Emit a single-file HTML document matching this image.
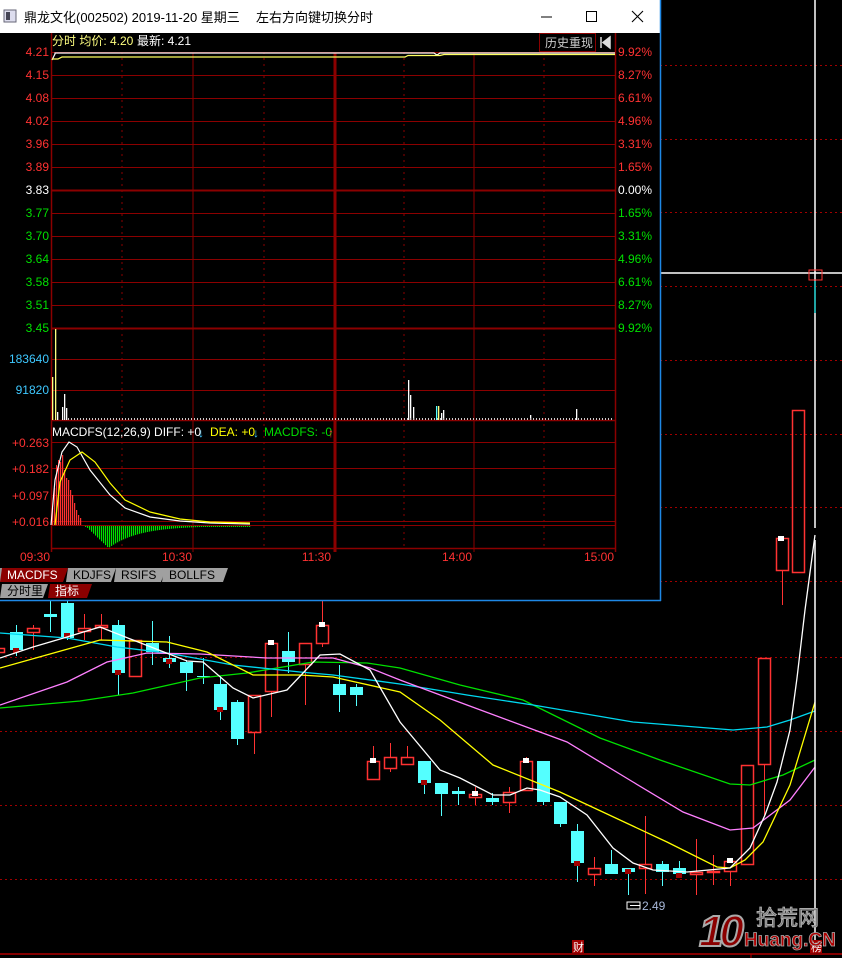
<!DOCTYPE html>
<html><head><meta charset="utf-8">
<style>
html,body{margin:0;padding:0;background:#000;width:842px;height:958px;overflow:hidden;font-family:"Liberation Sans","Noto Sans CJK SC",sans-serif;}
svg{position:absolute;left:0;top:0}
text{font-family:"Liberation Sans","Noto Sans CJK SC",sans-serif;}
</style></head>
<body>
<svg id="s" width="842" height="958" viewBox="0 0 842 958" xmlns="http://www.w3.org/2000/svg">
<rect width="842" height="958" fill="#000"/>
<g id="bg"></g>
<g id="cand"></g>
<g fill="none" stroke-width="1.3">
<polyline stroke="#00e000" points="0,708 80,701 133,693 200,678 247,673 313,662 367,663 400,668 460,685 523,700 600,738 660,760 730,784 750,785 783,775 815,760"/>
<polyline stroke="#00d8f0" points="0,633 67,638 117,647 167,653 233,665 300,672 333,675 400,684 467,695 533,705 633,722 733,730 767,727 790,720 815,711"/>
<polyline stroke="#ff80ff" points="0,705 67,682 107,662 147,653 200,654 267,658 333,658 370,668 400,680 467,705 567,742 633,782 683,812 730,830 753,828 790,800 815,767"/>
<polyline stroke="#ffff00" points="0,668 50,654 100,640 167,642 207,652 253,675 300,675 333,677 400,692 440,720 493,765 560,792 667,842 717,867 730,868 745,860 763,842 790,785 815,702"/>
<polyline stroke="#ffffff" points="0,658 33,647 67,637 100,627 133,640 187,661 203,662 233,688 253,698 287,690 320,655 340,654 370,670 400,722 440,770 460,778 493,795 510,795 527,788 540,790 560,797 587,815 613,848 633,863 653,870 687,872 730,868 750,848 765,815 777,782 790,730 797,678 805,610 815,535"/>
</g>
<line x1="660" y1="273" x2="842" y2="273" stroke="#fff" stroke-width="1.5"/>
<line x1="815" y1="0" x2="815" y2="528" stroke="#fff" stroke-width="1.5"/>
<line x1="815" y1="540" x2="815" y2="945" stroke="#fff" stroke-width="1.5"/>
<line x1="815" y1="281" x2="815" y2="313" stroke="#00b0b0" stroke-width="1.5"/>
<rect x="809" y="270" width="13" height="10" fill="none" stroke="#ff3232" stroke-width="1"/>
<line x1="0" y1="954" x2="842" y2="954" stroke="#b00000" stroke-width="1.5"/>
<line x1="751" y1="954" x2="751" y2="958" stroke="#b00000"/>
<rect x="572" y="940" width="12" height="13" fill="#a00000"/>
<text x="573" y="951" font-size="11" fill="#fff">财</text>
<rect x="810" y="940" width="12" height="13" fill="#a00000"/>
<text x="811" y="951" font-size="11" fill="#fff">榜</text>
<rect x="627" y="902" width="13" height="7" fill="none" stroke="#fff" stroke-width="1"/>
<line x1="630" y1="905.5" x2="640" y2="905.5" stroke="#fff"/>
<text x="642" y="910" font-size="12" fill="#a8b8d8">2.49</text>
<text x="699" y="946" font-size="44" font-weight="bold" fill="#8b0000" stroke="#aaa" stroke-width="2" font-style="italic" letter-spacing="-4">10</text>
<text x="756" y="925" font-size="21" fill="#555" stroke="#aaa" stroke-width="1">拾荒网</text>
<text x="744" y="946" font-size="19" font-weight="bold" fill="#b00000" stroke="#aaa" stroke-width="0.8">Huang.CN</text>

<rect x="0" y="0" width="661" height="601" fill="#000"/>
<rect x="0" y="0" width="661" height="33" fill="#fff"/>
<line x1="660.5" y1="0" x2="660.5" y2="601" stroke="#1e88e5" stroke-width="1.5"/>
<line x1="0" y1="600.5" x2="661" y2="600.5" stroke="#1e88e5" stroke-width="1.5"/>
<rect x="4" y="10" width="12" height="12" fill="#dde" stroke="#667"/>
<rect x="6" y="12" width="4" height="8" fill="#445"/>
<text x="24" y="22" font-size="13" fill="#000">鼎龙文化(002502) 2019-11-20 星期三</text>
<text x="256" y="22" font-size="13" fill="#000">左右方向键切换分时</text>
<line x1="541" y1="17" x2="552" y2="17" stroke="#000"/>
<rect x="586.5" y="11.5" width="10" height="10" fill="none" stroke="#000"/>
<path d="M632 11 L643 22 M643 11 L632 22" stroke="#000" stroke-width="1.1"/>
<g id="pop"></g>
</svg>
<script>
var NS="http://www.w3.org/2000/svg";
function el(p,t,a,txt){var e=document.createElementNS(NS,t);for(var k in a)e.setAttribute(k,a[k]);if(txt!==undefined)e.textContent=txt;document.getElementById(p).appendChild(e);return e;}
[65,139,212,286,360,434,507,581,657,731,805,879].forEach(function(y){el("bg","line",{x1:0,x2:842,y1:y+.5,y2:y+.5,stroke:"#a00000","stroke-dasharray":"2,3"});});
var C=[[-8,648,652,645,655,'r'],[10,632,650,625,656,'c'],[27,628,632,625,650,'r'],[44,614,617,600,632,'c'],[61,603,638,598,640,'c'],[78,628,631,614,640,'r'],[95,625,627,614,640,'r'],[112,625,673,620,695,'c'],[129,640,676,640,676,'r'],[146,643,652,621,665,'c'],[163,658,662,636,668,'c'],[180,662,673,660,691,'c'],[197,676,677,658,684,'c'],[214,684,710,676,720,'c'],[231,702,739,700,745,'c'],[248,695,732,695,754,'r'],[265,643,691,643,717,'r'],[282,651,662,632,673,'c'],[299,643,664,643,705,'r'],[316,625,643,601,647,'r'],[333,684,695,665,712,'c'],[350,687,695,684,706,'c'],[367,761,779,746,779,'r'],[384,757,768,743,772,'r'],[401,757,764,746,764,'r'],[418,761,783,761,794,'c'],[435,783,794,783,816,'c'],[452,791,794,787,805,'c'],[469,794,797,787,805,'r'],[486,798,802,793,805,'c'],[503,792,802,787,813,'r'],[520,761,790,757,790,'r'],[537,761,802,761,805,'c'],[554,802,824,802,827,'c'],[571,831,863,824,882,'c'],[588,868,874,857,886,'r'],[605,864,874,850,874,'c'],[622,868,872,868,895,'c'],[639,864,868,816,894,'r'],[656,864,872,861,886,'c'],[673,868,874,861,877,'c'],[690,872,874,839,895,'r'],[707,871,872,855,885,'r'],[724,861,871,861,886,'r'],[741,765,864,765,864,'r'],[758,658,764,658,816,'r'],[776,538,570,538,605,'r'],[792,410,572,410,572,'r']];
C.forEach(function(c){var x=c[0],w=13,cx=x+6.5;var col=c[5]=='c'?'#54ffff':'#ff3232';
 if(c[3]<c[1])el("cand","line",{x1:cx,x2:cx,y1:c[3],y2:c[1],stroke:col});
 if(c[4]>c[2])el("cand","line",{x1:cx,x2:cx,y1:c[2],y2:c[4],stroke:col});
 var h=Math.max(c[2]-c[1],1);
 if(c[5]=='c')el("cand","rect",{x:x,y:c[1],width:w,height:h,fill:col});
 else el("cand","rect",{x:x+.5,y:c[1]+.5,width:w-1,height:h,fill:"none",stroke:col,"stroke-width":1.5});
});
[[13,648,'#a00000'],[64,633,'#a00000'],[115,670,'#a00000'],[166,659,'#a00000'],[217,707,'#a00000'],[268,640,'#fff'],[319,622,'#fff'],[370,758,'#fff'],[421,780,'#a00000'],[472,791,'#fff'],[523,758,'#fff'],[574,861,'#a00000'],[625,869,'#a00000'],[676,873,'#a00000'],[727,858,'#fff'],[778,536,'#fff']].forEach(function(m){el("cand","rect",{x:m[0],y:m[1],width:6,height:5,fill:m[2]});});

var L=51,R=616,grid="#8b0000";
function line(x1,y1,x2,y2,st,w,da){var a={x1:x1,y1:y1,x2:x2,y2:y2,stroke:st,"stroke-width":w||1};if(da)a["stroke-dasharray"]=da;el("pop","line",a);}
var py=[52,75,98,121,144,167,190,213,236,259,282,305,328];
var pl=["4.21","4.15","4.08","4.02","3.96","3.89","3.83","3.77","3.70","3.64","3.58","3.51","3.45"];
var pr=["9.92%","8.27%","6.61%","4.96%","3.31%","1.65%","0.00%","1.65%","3.31%","4.96%","6.61%","8.27%","9.92%"];
py.forEach(function(y,i){var thick=(i==6||i==12);line(L,y+.5,R,y+.5,grid,thick?2:1);
 var col=i<6?"#ff3232":(i==6?"#fff":"#00e000");
 el("pop","text",{x:49,y:y+4,"font-size":12,fill:col,"text-anchor":"end"},pl[i]);
 el("pop","text",{x:618,y:y+4,"font-size":12,fill:col},pr[i]);});
[359,390].forEach(function(y){line(L,y+.5,R,y+.5,grid);});
line(L,420.5,R,420.5,grid,1.5);
el("pop","text",{x:49,y:363,"font-size":12,fill:"#3ec8ff","text-anchor":"end"},"183640");
el("pop","text",{x:49,y:394,"font-size":12,fill:"#3ec8ff","text-anchor":"end"},"91820");
[442,468,495,521].forEach(function(y){line(L,y+.5,R,y+.5,grid);});
line(L,525.5,R,525.5,grid,1);
line(L,548.5,R,548.5,grid,1.5);
var ml=["+0.263","+0.182","+0.097","+0.016"];
[442,468,495,521].forEach(function(y,i){el("pop","text",{x:49,y:y+5,"font-size":12,fill:"#ff3232","text-anchor":"end"},ml[i]);});
line(L+.5,33,L+.5,552,grid,1.5);
line(R-.5,33,R-.5,552,grid,1.5);
[[122,1],[193,0],[264,1],[335,2],[404,1],[474,0],[544,1]].forEach(function(v){
 if(v[1]==1)line(v[0],52,v[0],548,grid,1,"2,4");else line(v[0],52,v[0],552,grid,v[1]==2?3:1);});
[["09:30",50],["10:30",192],["11:30",331],["14:00",472],["15:00",614]].forEach(function(t){el("pop","text",{x:t[1],y:561,"font-size":12,fill:"#ff3232","text-anchor":"end"},t[0]);});
el("pop","text",{x:52,y:45,"font-size":12,fill:"#ffff80"},"分时 均价: ");
el("pop","text",{x:110,y:45,"font-size":12,fill:"#ffff80"},"4.20");
el("pop","text",{x:137,y:45,"font-size":12,fill:"#fff"},"最新: 4.21");
el("pop","rect",{x:539.5,y:33.5,width:56,height:18,fill:"#000",stroke:grid});
el("pop","text",{x:545,y:47,"font-size":12,fill:"#ccc"},"历史重现");
el("pop","path",{d:"M601 37 L601 48 M603 42.5 L610 37 L610 48 Z",stroke:"#ddd",fill:"#ddd","stroke-width":1.5});
el("pop","polyline",{points:"52,60 55,54 55,53 434,53 437,55 440,53 615,53",fill:"none",stroke:"#fff","stroke-width":1.2});
el("pop","polyline",{points:"52,59 58,59 62,57 405,57 408,55.5 440,55.5 444,54.5 615,54.5",fill:"none",stroke:"#ffff60","stroke-width":1.2});
[[52,377,'#ffff80'],[55,329,'#ffff80'],[57,412,'#fff'],[62,407,'#fff'],[64,394,'#fff'],[66,408,'#fff'],[408,380,'#fff'],[410,395,'#fff'],[413,407,'#fff'],[436,406,'#54ffff'],[438,406,'#ffff80'],[441,413,'#fff'],[443,410,'#fff'],[530,415,'#fff'],[576,409,'#fff']].forEach(function(v){el("pop","rect",{x:v[0],y:v[1],width:1.3,height:420-v[1],fill:v[2]});});
for(var x=68;x<614;x+=3){el("pop","rect",{x:x,y:418,width:1,height:2,fill:"#ccc"});}
el("pop","text",{x:52,y:436,"font-size":12,fill:"#fff"},"MACDFS(12,26,9) DIFF: +0");
el("pop","text",{x:198,y:437,"font-size":12,fill:"#3ec8ff","font-family":"DejaVu Sans"},"↓");
el("pop","text",{x:210,y:436,"font-size":12,fill:"#ffff00"},"DEA: +0");
el("pop","text",{x:253,y:437,"font-size":12,fill:"#3ec8ff","font-family":"DejaVu Sans"},"↓");
el("pop","text",{x:264,y:436,"font-size":12,fill:"#00e000"},"MACDFS: -0");
el("pop","text",{x:328,y:437,"font-size":12,fill:"#ff3232","font-family":"DejaVu Sans"},"↑");
var rb=[[52,508],[54,488],[56,465],[58,460],[60,462],[62,455],[64,470],[66,478],[68,480],[70,490],[72,495],[74,503],[76,510],[78,515],[80,518]];
rb.forEach(function(b){el("pop","rect",{x:b[0],y:b[1],width:1.2,height:525-b[1],fill:"#ff3232"});});
for(var x=85;x<250;x+=2){var d=x<108?(x-85)/23:Math.exp(-(x-108)/30);var h=Math.max(1,d*22);el("pop","rect",{x:x,y:526,width:1.2,height:h,fill:"#00e000"});}
el("pop","polyline",{points:"51,525 55,480 62,452 69,442 77,447 90,470 110,495 125,508 150,517 180,521 210,523 250,524",fill:"none",stroke:"#fff","stroke-width":1.2});
el("pop","polyline",{points:"55,525 60,482 70,460 82,452 95,462 110,483 125,500 150,512 180,519 210,522 250,523",fill:"none",stroke:"#ffff00","stroke-width":1.2});
function tab(x,w,bg,txt,y,tc){el("pop","path",{d:"M"+x+" "+y+" L"+(x+w)+" "+y+" L"+(x+w-5)+" "+(y+14)+" L"+(x-2)+" "+(y+14)+" Z",fill:bg});el("pop","text",{x:x+5,y:y+11,"font-size":12,fill:tc},txt);}
tab(0,66,"#9a9a9a","",568,"#000");
tab(2,66,"#8b0000","MACDFS",568,"#fff");
tab(68,48,"#a0a0a0","KDJFS",568,"#000");
tab(116,50,"#a0a0a0","RSIFS",568,"#000");
tab(164,64,"#a0a0a0","BOLLFS",568,"#000");
tab(2,46,"#a0a0a0","分时里",584,"#000");
tab(50,42,"#8b0000","指标",584,"#fff");
</script>
</body></html>
